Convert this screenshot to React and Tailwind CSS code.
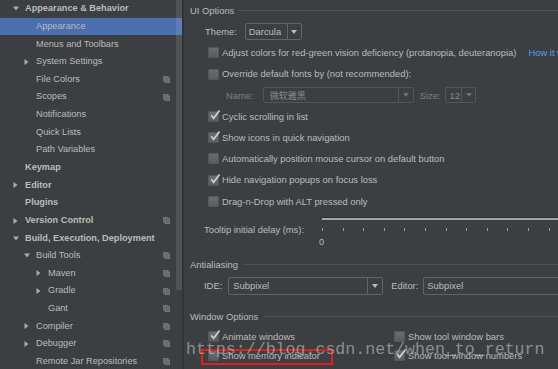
import React from 'react'

const tree = [
  { label: 'Appearance & Behavior', level: 0, bold: true, arrow: 'down' },
  { label: 'Appearance', level: 1, selected: true },
  { label: 'Menus and Toolbars', level: 1 },
  { label: 'System Settings', level: 1, arrow: 'right' },
  { label: 'File Colors', level: 1, icon: true },
  { label: 'Scopes', level: 1, icon: true },
  { label: 'Notifications', level: 1 },
  { label: 'Quick Lists', level: 1 },
  { label: 'Path Variables', level: 1 },
  { label: 'Keymap', level: 0, bold: true },
  { label: 'Editor', level: 0, bold: true, arrow: 'right' },
  { label: 'Plugins', level: 0, bold: true },
  { label: 'Version Control', level: 0, bold: true, arrow: 'right', icon: true },
  { label: 'Build, Execution, Deployment', level: 0, bold: true, arrow: 'down' },
  { label: 'Build Tools', level: 1, arrow: 'down', icon: true },
  { label: 'Maven', level: 2, arrow: 'right', icon: true },
  { label: 'Gradle', level: 2, arrow: 'right', icon: true },
  { label: 'Gant', level: 2, icon: true },
  { label: 'Compiler', level: 1, arrow: 'right', icon: true },
  { label: 'Debugger', level: 1, arrow: 'right', icon: true },
  { label: 'Remote Jar Repositories', level: 1, icon: true },
]

const indent = ['pl-[13px]', 'pl-[24px]', 'pl-[36px]']

function Arrow({ dir }) {
  if (dir === 'down') {
    return (
      <svg width="6" height="5" viewBox="0 0 6 5"><path d="M0 0.5h6L3 4.5z" fill="#a9abad" /></svg>
    )
  }
  return (
    <svg width="5" height="6" viewBox="0 0 5 6"><path d="M0.5 0v6L4.5 3z" fill="#a9abad" /></svg>
  )
}

function ProjectIcon() {
  return (
    <svg width="7" height="7" viewBox="0 0 7 7">
      <rect x="0.5" y="0.5" width="4.5" height="4.5" fill="#5e6163" stroke="#6f7274" strokeWidth="1" />
      <rect x="2" y="2" width="4.5" height="4.5" fill="#65686a" stroke="#737678" strokeWidth="1" />
    </svg>
  )
}

function TreeRow({ item }) {
  return (
    <div
      className={`flex items-center h-[17.65px] pr-[12px] ${indent[item.level]} ${
        item.selected ? 'bg-[#4b6eaf]' : ''
      }`}
    >
      <div className="w-[12px] flex items-center">{item.arrow && <Arrow dir={item.arrow} />}</div>
      <span className={`whitespace-nowrap ${item.bold ? 'font-bold' : ''}`}>{item.label}</span>
      {item.icon && (
        <div className="ml-auto flex items-center">
          <ProjectIcon />
        </div>
      )}
    </div>
  )
}

function Header({ title, lineGap = 'ml-[4px]', className = '' }) {
  return (
    <div className={`flex items-center pl-[6px] ${className}`}>
      <span className="whitespace-nowrap">{title}</span>
      <div className={`flex-1 h-px bg-[#4e5153] ${lineGap}`} />
    </div>
  )
}

function Box({ checked }) {
  return (
    <div className="relative w-[11px] h-[11px] shrink-0 rounded-[1px] border border-[#55585a] bg-gradient-to-b from-[#6a6d6f] to-[#5a5d5f]">
      {checked && (
        <svg className="absolute left-[0px] top-[-3px]" width="12" height="12" viewBox="0 0 12 12">
          <path d="M2.2 6.2l2.4 3.1L10.5 1.5" fill="none" stroke="#cfd0d1" strokeWidth="1.7" />
        </svg>
      )}
    </div>
  )
}

function Check({ checked, label, children }) {
  return (
    <div className="flex items-center gap-[3px] whitespace-nowrap">
      <Box checked={checked} />
      <span>{label}</span>
      {children}
    </div>
  )
}

function DropArrow({ color = '#bbbbbb' }) {
  return (
    <svg width="6" height="4" viewBox="0 0 6 4"><path d="M0 0h6L3 4z" fill={color} /></svg>
  )
}

export default function App() {
  return (
    <div className="relative w-[558px] h-[369px] overflow-hidden bg-[#3c3f41] text-[#bbbbbb] text-[9.2px] font-['Liberation_Sans',Arial,sans-serif] leading-none">
      <div className="flex h-full">
        {/* sidebar */}
        <div className="relative w-[184px] h-full border-r-2 border-[#313335] bg-[#3c3f41] shrink-0">
          {tree.map(item => (
            <TreeRow key={item.label} item={item} />
          ))}
          <div className="absolute right-0 top-0 w-[6px] h-[290px] bg-white/10" />
        </div>

        {/* settings panel */}
        <div className="flex-1 min-w-0 flex flex-col text-[9.4px]">
          <Header title="UI Options" className="h-[21.2px]" />

          <div className="h-[21.2px] flex items-center pl-[21px]">
            <span>Theme:</span>
            <div className="ml-[8px] w-[57px] h-[17px] shrink-0 flex items-center border border-[#646464] rounded-[2px]">
              <span className="flex-1 pl-[3px]">Darcula</span>
              <div className="w-[14px] h-full flex items-center justify-center border-l border-[#646464]">
                <DropArrow />
              </div>
            </div>
          </div>

          <div className="h-[21.2px] flex items-center pl-[24px]">
            <Check label="Adjust colors for red-green vision deficiency (protanopia, deuteranopia)">
              <span className="ml-[9px] text-[#589df6]">How it works?</span>
            </Check>
          </div>
          <div className="h-[21.2px] flex items-center pl-[24px]">
            <Check label="Override default fonts by (not recommended):" />
          </div>

          <div className="h-[21.2px] flex items-center pl-[42px] text-[#7d7f81]">
            <span>Name:</span>
            <div className="ml-[9px] w-[151px] h-[16px] shrink-0 flex items-center border border-[#535658] rounded-[2px]">
              <span className="flex-1 pl-[6px] text-[#8b8d8f] font-['Noto_Sans_CJK_SC',sans-serif] text-[9px]">微软雅黑</span>
              <div className="w-[15px] h-full flex items-center justify-center border-l border-[#535658]">
                <DropArrow color="#6e7173" />
              </div>
            </div>
            <span className="ml-[6px]">Size:</span>
            <div className="ml-[5px] w-[31px] h-[16px] shrink-0 flex items-center border border-[#535658] rounded-[2px]">
              <span className="flex-1 pl-[3px] text-[#8b8d8f]">12</span>
              <div className="w-[14px] h-full flex items-center justify-center border-l border-[#535658]">
                <DropArrow color="#6e7173" />
              </div>
            </div>
          </div>

          <div className="h-[21.2px] flex items-center pl-[24px]">
            <Check checked label="Cyclic scrolling in list" />
          </div>
          <div className="h-[21.2px] flex items-center pl-[24px]">
            <Check checked label="Show icons in quick navigation" />
          </div>
          <div className="h-[21.2px] flex items-center pl-[24px]">
            <Check label="Automatically position mouse cursor on default button" />
          </div>
          <div className="h-[21.2px] flex items-center pl-[24px]">
            <Check checked label="Hide navigation popups on focus loss" />
          </div>
          <div className="h-[21.2px] flex items-center pl-[24px]">
            <Check label="Drag-n-Drop with ALT pressed only" />
          </div>

          <div className="h-[42px] flex pl-[20px]">
            <div className="w-[118px] shrink-0 pt-[13px] whitespace-nowrap">Tooltip initial delay (ms):</div>
            <div className="flex-1 pt-[5px]">
              <div className="h-[3px] border-t border-[#2b2b2b] bg-[#a3a5a7]" />
              <div className="flex gap-[19.6px] mt-[8px] h-[3px]">
                {Array.from({ length: 12 }).map((_, i) => (
                  <div key={i} className="w-px h-[3px] bg-[#9a9c9e] shrink-0" />
                ))}
              </div>
              <div className="mt-[6px] -ml-[3px]">0</div>
            </div>
          </div>

          <Header title="Antialiasing" lineGap="ml-[6px]" className="h-[22px]" />

          <div className="h-[20px] flex items-center pl-[20px]">
            <span>IDE:</span>
            <div className="ml-[6px] w-[155px] h-[18px] shrink-0 flex items-center border border-[#646464] rounded-[2px]">
              <span className="flex-1 pl-[4px]">Subpixel</span>
              <div className="w-[15px] h-full flex items-center justify-center border-l border-[#646464]">
                <DropArrow />
              </div>
            </div>
            <span className="ml-[8px]">Editor:</span>
            <div className="ml-[5px] w-[150px] h-[18px] shrink-0 flex items-center border border-[#646464] rounded-[2px]">
              <span className="pl-[3px]">Subpixel</span>
            </div>
          </div>

          <Header title="Window Options" lineGap="ml-[6px]" className="h-[20px] mt-[11px]" />

          <div className="h-[20px] flex items-center pl-[24px]">
            <div className="w-[186px] shrink-0">
              <Check checked label="Animate windows" />
            </div>
            <Check label="Show tool window bars" />
          </div>
          <div className="h-[17px] flex items-center pl-[24px]">
            <div className="w-[186px] shrink-0">
              <Check label="Show memory indicator" />
            </div>
            <Check checked label="Show tool window numbers" />
          </div>
        </div>
      </div>

      {/* annotation box */}
      <div className="absolute left-[201px] top-[349px] w-[132px] h-[16px] border-2 border-[#e0201f]" />

      {/* watermark */}
      <div className="absolute left-[186px] top-[342px] text-[16.6px] leading-none font-['Liberation_Mono',monospace] text-[#d2d2d2]/55 whitespace-nowrap pointer-events-none">
        https://blog.csdn.net/when_to_return
      </div>
    </div>
  )
}
